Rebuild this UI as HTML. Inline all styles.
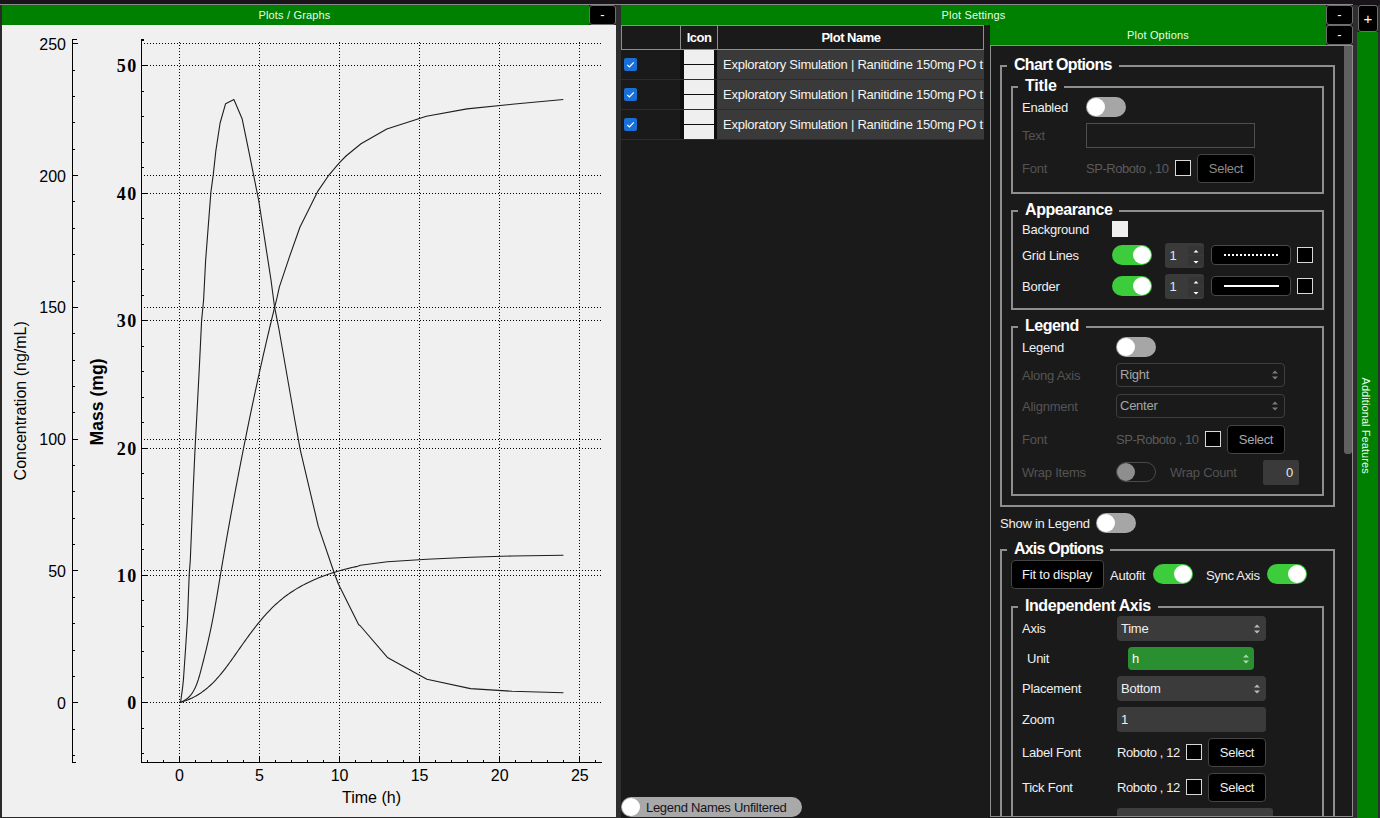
<!DOCTYPE html>
<html><head><meta charset="utf-8">
<style>
*{box-sizing:border-box;margin:0;padding:0}
html,body{width:1380px;height:818px;overflow:hidden;background:#1a1a1a;font-family:"Liberation Sans",sans-serif}
.a{position:absolute}
.hdr{position:absolute;background:#008000;color:#e6ffe6;font-size:11px;letter-spacing:0.17px;text-align:center;line-height:20px;white-space:nowrap}
.btn{position:absolute;background:#000;border:1px solid #6e6e6e;border-radius:3px;color:#fff;font-size:13px;text-align:center}
.t{position:absolute;white-space:nowrap;color:#f2f2f2;font-size:13px;letter-spacing:-0.4px}
.dim{color:#5c5c5c}
.gb{position:absolute;border:2px solid #8e8e8e}
.gt{position:absolute;white-space:nowrap;color:#fff;font-size:16px;font-weight:bold;background:#1a1a1a;padding:0 7px;letter-spacing:-0.6px;line-height:18px}
.tog{position:absolute;width:40px;height:20px;border-radius:10px;background:#a6a6a6}
.tog::after{content:"";position:absolute;top:1px;left:1px;width:18px;height:18px;border-radius:50%;background:#fff}
.tog.on{background:#3ccc3c}
.tog.on::after{left:21px}
.sw{position:absolute;width:16px;height:16px;background:#000;border:1.5px solid #d8d8d8}
.sel{position:absolute;background:#000;border:1px solid #454545;border-radius:4px;color:#eee;font-size:13px;text-align:center;letter-spacing:-0.3px}
.cb{position:absolute;background:#3b3b3b;border-radius:3px;color:#f0f0f0;font-size:13px;padding-left:6px;letter-spacing:-0.3px}
.arr{position:absolute;right:6px;top:50%;width:7px;height:10px;margin-top:-5px}
</style></head><body>
<!-- top strip -->
<div class="a" style="left:0;top:0;width:1380px;height:5px;background:#19141a"></div>
<div class="a" style="left:0;top:4px;width:1353px;height:1px;background:#8a8a8a"></div>

<!-- LEFT PANEL: Plots / Graphs -->
<div class="hdr" style="left:0;top:5px;width:589px;height:20px">Plots / Graphs</div>
<div class="a" style="left:0;top:5px;width:2px;height:813px;background:#2a2a2a"></div>
<div class="btn" style="left:589px;top:5px;width:27px;height:20px;line-height:17px">-</div>
<div class="a" style="left:2px;top:25px;width:614px;height:792px;background:#f0f0f0"></div>
<!-- CHART START -->
<svg class="a" style="left:0;top:0" width="617" height="818" viewBox="0 0 617 818">
<line x1="144" y1="702.5" x2="602" y2="702.5" stroke="#000" stroke-width="1" stroke-dasharray="1 2" shape-rendering="crispEdges"/>
<line x1="144" y1="570.5" x2="602" y2="570.5" stroke="#000" stroke-width="1" stroke-dasharray="1 2" shape-rendering="crispEdges"/>
<line x1="144" y1="439.5" x2="602" y2="439.5" stroke="#000" stroke-width="1" stroke-dasharray="1 2" shape-rendering="crispEdges"/>
<line x1="144" y1="307.5" x2="602" y2="307.5" stroke="#000" stroke-width="1" stroke-dasharray="1 2" shape-rendering="crispEdges"/>
<line x1="144" y1="175.5" x2="602" y2="175.5" stroke="#000" stroke-width="1" stroke-dasharray="1 2" shape-rendering="crispEdges"/>
<line x1="144" y1="43.5" x2="602" y2="43.5" stroke="#000" stroke-width="1" stroke-dasharray="1 2" shape-rendering="crispEdges"/>
<line x1="144" y1="702.5" x2="602" y2="702.5" stroke="#000" stroke-width="1" stroke-dasharray="1 2" shape-rendering="crispEdges"/>
<line x1="144" y1="575.5" x2="602" y2="575.5" stroke="#000" stroke-width="1" stroke-dasharray="1 2" shape-rendering="crispEdges"/>
<line x1="144" y1="448.5" x2="602" y2="448.5" stroke="#000" stroke-width="1" stroke-dasharray="1 2" shape-rendering="crispEdges"/>
<line x1="144" y1="320.5" x2="602" y2="320.5" stroke="#000" stroke-width="1" stroke-dasharray="1 2" shape-rendering="crispEdges"/>
<line x1="144" y1="193.5" x2="602" y2="193.5" stroke="#000" stroke-width="1" stroke-dasharray="1 2" shape-rendering="crispEdges"/>
<line x1="144" y1="65.5" x2="602" y2="65.5" stroke="#000" stroke-width="1" stroke-dasharray="1 2" shape-rendering="crispEdges"/>
<line x1="179.5" y1="42" x2="179.5" y2="762" stroke="#000" stroke-width="1" stroke-dasharray="1 2" shape-rendering="crispEdges"/>
<line x1="259.5" y1="42" x2="259.5" y2="762" stroke="#000" stroke-width="1" stroke-dasharray="1 2" shape-rendering="crispEdges"/>
<line x1="339.5" y1="42" x2="339.5" y2="762" stroke="#000" stroke-width="1" stroke-dasharray="1 2" shape-rendering="crispEdges"/>
<line x1="419.5" y1="42" x2="419.5" y2="762" stroke="#000" stroke-width="1" stroke-dasharray="1 2" shape-rendering="crispEdges"/>
<line x1="499.5" y1="42" x2="499.5" y2="762" stroke="#000" stroke-width="1" stroke-dasharray="1 2" shape-rendering="crispEdges"/>
<line x1="579.5" y1="42" x2="579.5" y2="762" stroke="#000" stroke-width="1" stroke-dasharray="1 2" shape-rendering="crispEdges"/>
<line x1="72.5" y1="39" x2="72.5" y2="763" stroke="#000" stroke-width="1" shape-rendering="crispEdges"/>
<line x1="72" y1="39.5" x2="77" y2="39.5" stroke="#000" stroke-width="1" shape-rendering="crispEdges"/>
<line x1="72" y1="762.5" x2="76" y2="762.5" stroke="#000" stroke-width="1" shape-rendering="crispEdges"/>
<line x1="72" y1="755.5" x2="74.5" y2="755.5" stroke="#000" stroke-width="1" shape-rendering="crispEdges"/>
<line x1="72" y1="729.5" x2="74.5" y2="729.5" stroke="#000" stroke-width="1" shape-rendering="crispEdges"/>
<line x1="72" y1="702.5" x2="78" y2="702.5" stroke="#000" stroke-width="1" shape-rendering="crispEdges"/>
<line x1="72" y1="676.5" x2="74.5" y2="676.5" stroke="#000" stroke-width="1" shape-rendering="crispEdges"/>
<line x1="72" y1="650.5" x2="74.5" y2="650.5" stroke="#000" stroke-width="1" shape-rendering="crispEdges"/>
<line x1="72" y1="623.5" x2="74.5" y2="623.5" stroke="#000" stroke-width="1" shape-rendering="crispEdges"/>
<line x1="72" y1="597.5" x2="74.5" y2="597.5" stroke="#000" stroke-width="1" shape-rendering="crispEdges"/>
<line x1="72" y1="570.5" x2="78" y2="570.5" stroke="#000" stroke-width="1" shape-rendering="crispEdges"/>
<line x1="72" y1="544.5" x2="74.5" y2="544.5" stroke="#000" stroke-width="1" shape-rendering="crispEdges"/>
<line x1="72" y1="518.5" x2="74.5" y2="518.5" stroke="#000" stroke-width="1" shape-rendering="crispEdges"/>
<line x1="72" y1="491.5" x2="74.5" y2="491.5" stroke="#000" stroke-width="1" shape-rendering="crispEdges"/>
<line x1="72" y1="465.5" x2="74.5" y2="465.5" stroke="#000" stroke-width="1" shape-rendering="crispEdges"/>
<line x1="72" y1="439.5" x2="78" y2="439.5" stroke="#000" stroke-width="1" shape-rendering="crispEdges"/>
<line x1="72" y1="412.5" x2="74.5" y2="412.5" stroke="#000" stroke-width="1" shape-rendering="crispEdges"/>
<line x1="72" y1="386.5" x2="74.5" y2="386.5" stroke="#000" stroke-width="1" shape-rendering="crispEdges"/>
<line x1="72" y1="360.5" x2="74.5" y2="360.5" stroke="#000" stroke-width="1" shape-rendering="crispEdges"/>
<line x1="72" y1="333.5" x2="74.5" y2="333.5" stroke="#000" stroke-width="1" shape-rendering="crispEdges"/>
<line x1="72" y1="307.5" x2="78" y2="307.5" stroke="#000" stroke-width="1" shape-rendering="crispEdges"/>
<line x1="72" y1="281.5" x2="74.5" y2="281.5" stroke="#000" stroke-width="1" shape-rendering="crispEdges"/>
<line x1="72" y1="254.5" x2="74.5" y2="254.5" stroke="#000" stroke-width="1" shape-rendering="crispEdges"/>
<line x1="72" y1="228.5" x2="74.5" y2="228.5" stroke="#000" stroke-width="1" shape-rendering="crispEdges"/>
<line x1="72" y1="201.5" x2="74.5" y2="201.5" stroke="#000" stroke-width="1" shape-rendering="crispEdges"/>
<line x1="72" y1="175.5" x2="78" y2="175.5" stroke="#000" stroke-width="1" shape-rendering="crispEdges"/>
<line x1="72" y1="149.5" x2="74.5" y2="149.5" stroke="#000" stroke-width="1" shape-rendering="crispEdges"/>
<line x1="72" y1="122.5" x2="74.5" y2="122.5" stroke="#000" stroke-width="1" shape-rendering="crispEdges"/>
<line x1="72" y1="96.5" x2="74.5" y2="96.5" stroke="#000" stroke-width="1" shape-rendering="crispEdges"/>
<line x1="72" y1="70.5" x2="74.5" y2="70.5" stroke="#000" stroke-width="1" shape-rendering="crispEdges"/>
<line x1="72" y1="43.5" x2="78" y2="43.5" stroke="#000" stroke-width="1" shape-rendering="crispEdges"/>
<line x1="141.5" y1="39" x2="141.5" y2="763" stroke="#000" stroke-width="1" shape-rendering="crispEdges"/>
<line x1="141" y1="39.5" x2="144" y2="39.5" stroke="#000" stroke-width="1" shape-rendering="crispEdges"/>
<line x1="141" y1="753.5" x2="143.5" y2="753.5" stroke="#000" stroke-width="1" shape-rendering="crispEdges"/>
<line x1="141" y1="728.5" x2="143.5" y2="728.5" stroke="#000" stroke-width="1" shape-rendering="crispEdges"/>
<line x1="141" y1="702.5" x2="148" y2="702.5" stroke="#000" stroke-width="1" shape-rendering="crispEdges"/>
<line x1="141" y1="677.5" x2="143.5" y2="677.5" stroke="#000" stroke-width="1" shape-rendering="crispEdges"/>
<line x1="141" y1="651.5" x2="143.5" y2="651.5" stroke="#000" stroke-width="1" shape-rendering="crispEdges"/>
<line x1="141" y1="626.5" x2="143.5" y2="626.5" stroke="#000" stroke-width="1" shape-rendering="crispEdges"/>
<line x1="141" y1="600.5" x2="143.5" y2="600.5" stroke="#000" stroke-width="1" shape-rendering="crispEdges"/>
<line x1="141" y1="575.5" x2="148" y2="575.5" stroke="#000" stroke-width="1" shape-rendering="crispEdges"/>
<line x1="141" y1="549.5" x2="143.5" y2="549.5" stroke="#000" stroke-width="1" shape-rendering="crispEdges"/>
<line x1="141" y1="524.5" x2="143.5" y2="524.5" stroke="#000" stroke-width="1" shape-rendering="crispEdges"/>
<line x1="141" y1="498.5" x2="143.5" y2="498.5" stroke="#000" stroke-width="1" shape-rendering="crispEdges"/>
<line x1="141" y1="473.5" x2="143.5" y2="473.5" stroke="#000" stroke-width="1" shape-rendering="crispEdges"/>
<line x1="141" y1="448.5" x2="148" y2="448.5" stroke="#000" stroke-width="1" shape-rendering="crispEdges"/>
<line x1="141" y1="422.5" x2="143.5" y2="422.5" stroke="#000" stroke-width="1" shape-rendering="crispEdges"/>
<line x1="141" y1="397.5" x2="143.5" y2="397.5" stroke="#000" stroke-width="1" shape-rendering="crispEdges"/>
<line x1="141" y1="371.5" x2="143.5" y2="371.5" stroke="#000" stroke-width="1" shape-rendering="crispEdges"/>
<line x1="141" y1="346.5" x2="143.5" y2="346.5" stroke="#000" stroke-width="1" shape-rendering="crispEdges"/>
<line x1="141" y1="320.5" x2="148" y2="320.5" stroke="#000" stroke-width="1" shape-rendering="crispEdges"/>
<line x1="141" y1="295.5" x2="143.5" y2="295.5" stroke="#000" stroke-width="1" shape-rendering="crispEdges"/>
<line x1="141" y1="269.5" x2="143.5" y2="269.5" stroke="#000" stroke-width="1" shape-rendering="crispEdges"/>
<line x1="141" y1="244.5" x2="143.5" y2="244.5" stroke="#000" stroke-width="1" shape-rendering="crispEdges"/>
<line x1="141" y1="218.5" x2="143.5" y2="218.5" stroke="#000" stroke-width="1" shape-rendering="crispEdges"/>
<line x1="141" y1="193.5" x2="148" y2="193.5" stroke="#000" stroke-width="1" shape-rendering="crispEdges"/>
<line x1="141" y1="167.5" x2="143.5" y2="167.5" stroke="#000" stroke-width="1" shape-rendering="crispEdges"/>
<line x1="141" y1="142.5" x2="143.5" y2="142.5" stroke="#000" stroke-width="1" shape-rendering="crispEdges"/>
<line x1="141" y1="116.5" x2="143.5" y2="116.5" stroke="#000" stroke-width="1" shape-rendering="crispEdges"/>
<line x1="141" y1="91.5" x2="143.5" y2="91.5" stroke="#000" stroke-width="1" shape-rendering="crispEdges"/>
<line x1="141" y1="65.5" x2="148" y2="65.5" stroke="#000" stroke-width="1" shape-rendering="crispEdges"/>
<line x1="141" y1="40.5" x2="143.5" y2="40.5" stroke="#000" stroke-width="1" shape-rendering="crispEdges"/>
<line x1="141" y1="762.5" x2="602" y2="762.5" stroke="#000" stroke-width="1" shape-rendering="crispEdges"/>
<line x1="147.5" y1="759.5" x2="147.5" y2="762" stroke="#000" stroke-width="1" shape-rendering="crispEdges"/>
<line x1="163.5" y1="759.5" x2="163.5" y2="762" stroke="#000" stroke-width="1" shape-rendering="crispEdges"/>
<line x1="179.5" y1="756" x2="179.5" y2="762" stroke="#000" stroke-width="1" shape-rendering="crispEdges"/>
<line x1="195.5" y1="759.5" x2="195.5" y2="762" stroke="#000" stroke-width="1" shape-rendering="crispEdges"/>
<line x1="211.5" y1="759.5" x2="211.5" y2="762" stroke="#000" stroke-width="1" shape-rendering="crispEdges"/>
<line x1="227.5" y1="759.5" x2="227.5" y2="762" stroke="#000" stroke-width="1" shape-rendering="crispEdges"/>
<line x1="243.5" y1="759.5" x2="243.5" y2="762" stroke="#000" stroke-width="1" shape-rendering="crispEdges"/>
<line x1="259.5" y1="756" x2="259.5" y2="762" stroke="#000" stroke-width="1" shape-rendering="crispEdges"/>
<line x1="275.5" y1="759.5" x2="275.5" y2="762" stroke="#000" stroke-width="1" shape-rendering="crispEdges"/>
<line x1="291.5" y1="759.5" x2="291.5" y2="762" stroke="#000" stroke-width="1" shape-rendering="crispEdges"/>
<line x1="307.5" y1="759.5" x2="307.5" y2="762" stroke="#000" stroke-width="1" shape-rendering="crispEdges"/>
<line x1="323.5" y1="759.5" x2="323.5" y2="762" stroke="#000" stroke-width="1" shape-rendering="crispEdges"/>
<line x1="339.5" y1="756" x2="339.5" y2="762" stroke="#000" stroke-width="1" shape-rendering="crispEdges"/>
<line x1="355.5" y1="759.5" x2="355.5" y2="762" stroke="#000" stroke-width="1" shape-rendering="crispEdges"/>
<line x1="371.5" y1="759.5" x2="371.5" y2="762" stroke="#000" stroke-width="1" shape-rendering="crispEdges"/>
<line x1="387.5" y1="759.5" x2="387.5" y2="762" stroke="#000" stroke-width="1" shape-rendering="crispEdges"/>
<line x1="403.5" y1="759.5" x2="403.5" y2="762" stroke="#000" stroke-width="1" shape-rendering="crispEdges"/>
<line x1="419.5" y1="756" x2="419.5" y2="762" stroke="#000" stroke-width="1" shape-rendering="crispEdges"/>
<line x1="435.5" y1="759.5" x2="435.5" y2="762" stroke="#000" stroke-width="1" shape-rendering="crispEdges"/>
<line x1="451.5" y1="759.5" x2="451.5" y2="762" stroke="#000" stroke-width="1" shape-rendering="crispEdges"/>
<line x1="467.5" y1="759.5" x2="467.5" y2="762" stroke="#000" stroke-width="1" shape-rendering="crispEdges"/>
<line x1="483.5" y1="759.5" x2="483.5" y2="762" stroke="#000" stroke-width="1" shape-rendering="crispEdges"/>
<line x1="499.5" y1="756" x2="499.5" y2="762" stroke="#000" stroke-width="1" shape-rendering="crispEdges"/>
<line x1="515.5" y1="759.5" x2="515.5" y2="762" stroke="#000" stroke-width="1" shape-rendering="crispEdges"/>
<line x1="531.5" y1="759.5" x2="531.5" y2="762" stroke="#000" stroke-width="1" shape-rendering="crispEdges"/>
<line x1="547.5" y1="759.5" x2="547.5" y2="762" stroke="#000" stroke-width="1" shape-rendering="crispEdges"/>
<line x1="563.5" y1="759.5" x2="563.5" y2="762" stroke="#000" stroke-width="1" shape-rendering="crispEdges"/>
<line x1="579.5" y1="756" x2="579.5" y2="762" stroke="#000" stroke-width="1" shape-rendering="crispEdges"/>
<line x1="595.5" y1="759.5" x2="595.5" y2="762" stroke="#000" stroke-width="1" shape-rendering="crispEdges"/>
<text x="66" y="708.8" text-anchor="end" font-family="Liberation Sans" font-size="16" fill="#000">0</text>
<text x="66" y="577.0" text-anchor="end" font-family="Liberation Sans" font-size="16" fill="#000">50</text>
<text x="66" y="445.2" text-anchor="end" font-family="Liberation Sans" font-size="16" fill="#000">100</text>
<text x="66" y="313.4" text-anchor="end" font-family="Liberation Sans" font-size="16" fill="#000">150</text>
<text x="66" y="181.6" text-anchor="end" font-family="Liberation Sans" font-size="16" fill="#000">200</text>
<text x="66" y="49.8" text-anchor="end" font-family="Liberation Sans" font-size="16" fill="#000">250</text>
<text x="137.8" y="709.3" text-anchor="end" font-family="Liberation Serif" font-weight="bold" font-size="18" letter-spacing="1.5" fill="#000">0</text>
<text x="137.8" y="581.9" text-anchor="end" font-family="Liberation Serif" font-weight="bold" font-size="18" letter-spacing="1.5" fill="#000">10</text>
<text x="137.8" y="454.5" text-anchor="end" font-family="Liberation Serif" font-weight="bold" font-size="18" letter-spacing="1.5" fill="#000">20</text>
<text x="137.8" y="327.2" text-anchor="end" font-family="Liberation Serif" font-weight="bold" font-size="18" letter-spacing="1.5" fill="#000">30</text>
<text x="137.8" y="199.8" text-anchor="end" font-family="Liberation Serif" font-weight="bold" font-size="18" letter-spacing="1.5" fill="#000">40</text>
<text x="137.8" y="72.4" text-anchor="end" font-family="Liberation Serif" font-weight="bold" font-size="18" letter-spacing="1.5" fill="#000">50</text>
<text x="179.4" y="781" text-anchor="middle" font-family="Liberation Sans" font-size="16" fill="#000">0</text>
<text x="259.5" y="781" text-anchor="middle" font-family="Liberation Sans" font-size="16" fill="#000">5</text>
<text x="339.6" y="781" text-anchor="middle" font-family="Liberation Sans" font-size="16" fill="#000">10</text>
<text x="419.6" y="781" text-anchor="middle" font-family="Liberation Sans" font-size="16" fill="#000">15</text>
<text x="499.7" y="781" text-anchor="middle" font-family="Liberation Sans" font-size="16" fill="#000">20</text>
<text x="579.8" y="781" text-anchor="middle" font-family="Liberation Sans" font-size="16" fill="#000">25</text>
<text x="371.5" y="802.8" text-anchor="middle" font-family="Liberation Sans" font-size="16" fill="#000">Time (h)</text>
<text transform="translate(25.9 400.8) rotate(-90)" text-anchor="middle" font-family="Liberation Sans" font-size="16" fill="#000">Concentration (ng/mL)</text>
<text transform="translate(103.2 401.9) rotate(-90)" text-anchor="middle" font-family="Liberation Sans" font-weight="bold" font-size="17.6" fill="#000">Mass (mg)</text>
<path d="M179.50,702.50 L180.80,700.80 L182.60,687.60 L183.40,680.00 L185.60,648.20 L187.50,618.80 L189.20,574.70 L190.30,560.00 L193.40,485.10 L195.10,447.40 L196.60,420.00 L199.40,366.20 L201.60,320.60 L203.60,300.00 L205.60,260.70 L210.90,192.10 L213.30,174.40 L215.80,151.20 L220.10,123.00 L225.60,103.70 L233.90,99.50 L242.10,118.70 L248.80,151.20 L253.70,175.60 L258.80,201.00 L271.00,280.00 L274.50,306.70 L279.10,330.00 L294.80,420.00 L300.20,449.60 L318.30,526.40 L334.40,573.50 L338.50,584.30 L358.70,624.70 L360.00,625.50 L387.40,657.40 L426.90,679.20 L470.50,688.60 L512.10,691.30 L563.40,692.70" fill="none" stroke="#1e1e1e" stroke-width="1.1" stroke-linejoin="round"/>
<path d="M179.50,702.50 L182.00,701.67 L184.28,700.58 L186.35,699.26 L188.24,697.73 L189.95,696.00 L191.50,694.10 L192.90,692.03 L194.16,689.82 L195.31,687.48 L196.36,685.04 L197.31,682.50 L198.19,679.90 L199.01,677.23 L199.78,674.53 L200.51,671.82 L201.23,669.10 L201.94,666.39 L202.64,663.68 L203.33,660.99 L204.01,658.30 L204.68,655.62 L205.34,652.95 L205.99,650.28 L206.63,647.61 L207.25,644.95 L207.87,642.30 L208.47,639.64 L209.07,636.99 L209.65,634.35 L210.21,631.70 L210.77,629.06 L211.31,626.41 L211.85,623.77 L212.37,621.12 L212.88,618.48 L213.38,615.84 L213.87,613.20 L214.36,610.55 L214.84,607.91 L215.31,605.27 L215.77,602.62 L216.23,599.98 L216.69,597.34 L217.14,594.69 L217.58,592.05 L218.03,589.40 L218.47,586.75 L218.91,584.11 L219.35,581.46 L219.79,578.81 L220.23,576.16 L220.67,573.51 L221.11,570.85 L221.56,568.20 L222.00,565.54 L222.45,562.89 L222.91,560.23 L223.36,557.57 L223.82,554.91 L224.27,552.25 L224.73,549.58 L225.20,546.92 L225.66,544.26 L226.12,541.60 L226.59,538.93 L227.06,536.27 L227.53,533.60 L228.01,530.94 L228.48,528.27 L228.96,525.61 L229.44,522.95 L229.92,520.28 L230.40,517.62 L230.88,514.95 L231.37,512.29 L231.86,509.63 L232.35,506.97 L232.84,504.31 L233.33,501.65 L233.82,498.99 L234.32,496.33 L234.81,493.67 L235.31,491.02 L235.81,488.36 L236.31,485.71 L236.81,483.06 L237.31,480.41 L237.82,477.76 L238.32,475.12 L238.83,472.47 L239.34,469.83 L239.85,467.19 L240.36,464.55 L240.87,461.91 L241.39,459.27 L241.90,456.63 L242.42,454.00 L242.94,451.37 L243.46,448.73 L243.98,446.10 L244.50,443.47 L245.03,440.84 L245.56,438.21 L246.09,435.58 L246.62,432.95 L247.15,430.32 L247.68,427.69 L248.22,425.06 L248.76,422.44 L249.30,419.81 L249.84,417.18 L250.39,414.55 L250.93,411.93 L251.48,409.30 L252.03,406.67 L252.59,404.04 L253.14,401.42 L253.70,398.79 L254.26,396.16 L254.82,393.53 L255.39,390.90 L255.96,388.27 L256.53,385.64 L257.10,383.01 L257.68,380.37 L258.25,377.74 L258.83,375.10 L259.42,372.47 L260.00,369.83 L260.59,367.19 L261.18,364.55 L261.78,361.91 L262.37,359.27 L262.97,356.62 L263.57,353.98 L264.18,351.33 L264.79,348.68 L265.40,346.03 L266.01,343.38 L266.63,340.72 L267.25,338.07 L267.87,335.41 L268.50,332.75 L269.13,330.08 L269.76,327.42 L270.40,324.75 L271.04,322.08 L271.68,319.41 L272.33,316.73 L272.98,314.05 L273.63,311.37 L274.29,308.69 L274.95,306.00 L275.61,303.32 L276.28,300.62 L276.96,297.93 L279.40,286.90 L289.70,256.10 L300.00,227.00 L308.50,209.90 L317.90,191.10 L329.10,174.80 L339.30,162.80 L346.00,156.00 L361.00,143.80 L386.80,128.90 L426.40,116.20 L467.00,108.90 L512.10,104.30 L563.30,99.50" fill="none" stroke="#1e1e1e" stroke-width="1.1" stroke-linejoin="round"/>
<path d="M179.50,702.50 L181.00,702.11 L182.48,701.68 L183.93,701.23 L185.36,700.75 L186.76,700.24 L188.14,699.70 L189.50,699.13 L190.84,698.54 L192.15,697.93 L193.45,697.29 L194.72,696.62 L195.97,695.93 L197.21,695.21 L198.42,694.48 L199.62,693.72 L200.80,692.94 L201.96,692.13 L203.10,691.31 L204.22,690.47 L205.33,689.60 L206.43,688.72 L207.51,687.82 L208.57,686.90 L209.62,685.97 L210.66,685.01 L211.68,684.04 L212.69,683.06 L213.69,682.06 L214.67,681.04 L215.65,680.01 L216.61,678.97 L217.56,677.91 L218.50,676.84 L219.44,675.76 L220.36,674.67 L221.28,673.56 L222.18,672.45 L223.08,671.32 L223.98,670.19 L224.86,669.05 L225.74,667.90 L226.62,666.74 L227.49,665.58 L228.35,664.41 L229.21,663.23 L230.07,662.05 L230.93,660.86 L231.78,659.67 L232.63,658.47 L233.47,657.27 L234.32,656.07 L235.16,654.87 L236.01,653.66 L236.85,652.45 L237.70,651.25 L238.55,650.04 L239.39,648.83 L240.24,647.62 L241.09,646.42 L241.94,645.21 L242.79,644.00 L243.65,642.80 L244.51,641.60 L245.37,640.40 L246.23,639.20 L247.09,638.00 L247.96,636.81 L248.83,635.62 L249.70,634.43 L250.58,633.25 L251.46,632.07 L252.35,630.90 L253.24,629.73 L254.13,628.56 L255.03,627.40 L255.94,626.24 L256.85,625.09 L257.76,623.95 L258.68,622.81 L259.61,621.68 L260.54,620.56 L261.48,619.44 L262.42,618.33 L263.38,617.23 L264.33,616.14 L265.30,615.05 L266.27,613.98 L267.25,612.91 L268.24,611.85 L269.24,610.80 L270.24,609.76 L271.25,608.73 L272.27,607.72 L273.30,606.71 L274.34,605.71 L275.39,604.72 L276.45,603.75 L277.51,602.79 L278.59,601.84 L279.68,600.90 L280.78,599.97 L281.88,599.06 L283.00,598.16 L284.13,597.28 L285.27,596.40 L286.42,595.54 L287.58,594.70 L288.75,593.87 L289.94,593.05 L291.13,592.24 L292.33,591.45 L293.54,590.67 L294.76,589.90 L295.99,589.15 L297.23,588.40 L298.47,587.67 L299.73,586.95 L300.99,586.25 L302.27,585.55 L303.55,584.87 L304.83,584.20 L306.13,583.54 L307.43,582.89 L308.74,582.26 L310.06,581.63 L311.38,581.02 L312.71,580.42 L314.05,579.82 L315.39,579.24 L316.74,578.67 L318.10,578.11 L319.46,577.56 L320.83,577.02 L322.20,576.50 L323.58,575.98 L324.96,575.47 L326.35,574.97 L327.74,574.48 L329.13,574.00 L330.53,573.53 L331.94,573.07 L333.34,572.62 L334.76,572.18 L336.17,571.75 L337.59,571.32 L339.01,570.91 L340.43,570.50 L341.86,570.11 L343.29,569.72 L344.72,569.34 L346.16,568.97 L347.59,568.60 L349.03,568.25 L350.47,567.90 L351.91,567.56 L353.35,567.23 L354.79,566.90 L356.24,566.59 L357.68,566.28 L360.40,565.30 L387.40,561.80 L426.90,559.30 L470.50,557.20 L512.10,556.00 L563.40,555.20" fill="none" stroke="#1e1e1e" stroke-width="1.1" stroke-linejoin="round"/>
</svg>
<!-- CHART END -->
<div class="a" style="left:0;top:817px;width:621px;height:1px;background:#2a2a2a"></div>
<div class="a" style="left:616px;top:5px;width:5px;height:813px;background:#2e2e2e"></div>

<!-- MIDDLE PANEL: Plot Settings -->
<div class="hdr" style="left:621px;top:5px;width:705px;height:20px">Plot Settings</div>
<div class="btn" style="left:1326px;top:5px;width:27px;height:20px;line-height:17px">-</div>
<div class="a" style="left:1353px;top:5px;width:5px;height:813px;background:#2e2e2e"></div>


<!-- TABLE -->
<div class="a" style="left:621px;top:25px;width:363px;height:25px;border:1px solid #8e8e8e;background:#1a1a1a"></div>
<div class="a" style="left:680px;top:25px;width:1px;height:25px;background:#8e8e8e"></div>
<div class="a" style="left:717px;top:25px;width:1px;height:25px;background:#8e8e8e"></div>
<div class="t" style="left:681px;top:31px;width:36px;text-align:center;font-weight:bold;font-size:13px;line-height:13px;letter-spacing:-0.5px;color:#fff">Icon</div>
<div class="t" style="left:718px;top:31px;width:266px;text-align:center;font-weight:bold;font-size:13px;line-height:13px;letter-spacing:-0.5px;color:#fff">Plot Name</div>

<div class="a" style="left:621px;top:50px;width:59px;height:29px;background:#1a1a1a"></div>
<div class="a" style="left:621px;top:79px;width:363px;height:1px;background:#2c2c2c"></div>
<div class="a" style="left:680px;top:50px;width:37px;height:29px;background:#0e0e0e"></div>
<div class="a" style="left:684px;top:50px;width:30px;height:14px;background:#efefef"></div>
<div class="a" style="left:684px;top:65px;width:30px;height:14px;background:#efefef"></div>
<div class="a" style="left:717px;top:50px;width:267px;height:29px;background:#3a3a3a;overflow:hidden">
  <div class="t" style="left:6px;top:8px;font-size:13px;line-height:13px;letter-spacing:-0.25px;color:#f4f4f4">Exploratory Simulation | Ranitidine 150mg PO t</div>
</div>
<div class="a" style="left:624px;top:58px;width:13px;height:13px;border-radius:2px;background:#1a6fd6">
  <svg width="13" height="13" style="position:absolute;left:0;top:0"><path d="M3.2 6.8 L5.4 9 L9.8 4.4" stroke="#fff" stroke-width="1.2" fill="none"/></svg>
</div>
<div class="a" style="left:621px;top:80px;width:59px;height:29px;background:#1a1a1a"></div>
<div class="a" style="left:621px;top:109px;width:363px;height:1px;background:#2c2c2c"></div>
<div class="a" style="left:680px;top:80px;width:37px;height:29px;background:#0e0e0e"></div>
<div class="a" style="left:684px;top:80px;width:30px;height:14px;background:#efefef"></div>
<div class="a" style="left:684px;top:95px;width:30px;height:14px;background:#efefef"></div>
<div class="a" style="left:717px;top:80px;width:267px;height:29px;background:#3a3a3a;overflow:hidden">
  <div class="t" style="left:6px;top:8px;font-size:13px;line-height:13px;letter-spacing:-0.25px;color:#f4f4f4">Exploratory Simulation | Ranitidine 150mg PO t</div>
</div>
<div class="a" style="left:624px;top:88px;width:13px;height:13px;border-radius:2px;background:#1a6fd6">
  <svg width="13" height="13" style="position:absolute;left:0;top:0"><path d="M3.2 6.8 L5.4 9 L9.8 4.4" stroke="#fff" stroke-width="1.2" fill="none"/></svg>
</div>
<div class="a" style="left:621px;top:110px;width:59px;height:29px;background:#1a1a1a"></div>
<div class="a" style="left:621px;top:139px;width:363px;height:1px;background:#2c2c2c"></div>
<div class="a" style="left:680px;top:110px;width:37px;height:29px;background:#0e0e0e"></div>
<div class="a" style="left:684px;top:110px;width:30px;height:14px;background:#efefef"></div>
<div class="a" style="left:684px;top:125px;width:30px;height:14px;background:#efefef"></div>
<div class="a" style="left:717px;top:110px;width:267px;height:29px;background:#3a3a3a;overflow:hidden">
  <div class="t" style="left:6px;top:8px;font-size:13px;line-height:13px;letter-spacing:-0.25px;color:#f4f4f4">Exploratory Simulation | Ranitidine 150mg PO t</div>
</div>
<div class="a" style="left:624px;top:118px;width:13px;height:13px;border-radius:2px;background:#1a6fd6">
  <svg width="13" height="13" style="position:absolute;left:0;top:0"><path d="M3.2 6.8 L5.4 9 L9.8 4.4" stroke="#fff" stroke-width="1.2" fill="none"/></svg>
</div>
<!-- legend names unfiltered -->
<div class="a" style="left:621px;top:797px;width:181px;height:20px;border-radius:10px;background:#a9a9a9"></div>
<div class="a" style="left:622px;top:798px;width:18px;height:18px;border-radius:50%;background:#fff"></div>
<div class="t" style="left:646px;top:801px;font-size:13px;line-height:13px;letter-spacing:-0.3px;color:#15151f">Legend Names Unfiltered</div>

<!-- RIGHT: Plot Options -->
<div class="hdr" style="left:990px;top:25px;width:336px;height:20px">Plot Options</div>
<div class="btn" style="left:1326px;top:25px;width:27px;height:20px;line-height:17px">-</div>

<!-- OPTS START -->
<div class="a" style="left:990px;top:45px;width:363px;height:772px;border:1px solid #8e8e8e;border-bottom:1px solid #8e8e8e"></div>
<div class="a" style="left:1344px;top:46px;width:8px;height:408px;background:#606060;border-radius:0 0 3px 3px"></div>
<div class="gb" style="left:1000px;top:65px;width:335px;height:442px"></div>
<div class="gt" style="left:1007px;top:56px;letter-spacing:-0.69px">Chart Options</div>
<div class="gb" style="left:1011px;top:86px;width:313px;height:108px"></div>
<div class="gt" style="left:1018px;top:77px;letter-spacing:-0.2px">Title</div>
<div class="t" style="left:1022px;top:101.0px;font-size:13px;line-height:13px;color:#f0f0f0;letter-spacing:-0.25px;font-weight:normal;">Enabled</div>
<div class="tog" style="left:1086px;top:97px"></div>
<div class="t" style="left:1022px;top:129.0px;font-size:13px;line-height:13px;color:#545454;letter-spacing:-0.25px;font-weight:normal;">Text</div>
<div class="a" style="left:1086px;top:123px;width:169px;height:25px;background:transparent;border:1px solid #4e4e4e;border-radius:0px;"></div>
<div class="t" style="left:1022px;top:162.0px;font-size:13px;line-height:13px;color:#545454;letter-spacing:-0.25px;font-weight:normal;">Font</div>
<div class="t" style="left:1086px;top:162.0px;font-size:13px;line-height:13px;color:#5a5a5a;letter-spacing:-0.45px;font-weight:normal;">SP-Roboto , 10</div>
<div class="a" style="left:1175px;top:160px;width:16px;height:16px;background:#000;border:1.5px solid #d8d8d8"></div>
<div class="sel" style="left:1197px;top:154px;width:58px;height:29px;line-height:27px;color:#8c8c8c">Select</div>
<div class="gb" style="left:1011px;top:210px;width:313px;height:100px"></div>
<div class="gt" style="left:1018px;top:201px;letter-spacing:-0.42px">Appearance</div>
<div class="t" style="left:1022px;top:223.0px;font-size:13px;line-height:13px;color:#f0f0f0;letter-spacing:-0.25px;font-weight:normal;">Background</div>
<div class="a" style="left:1112px;top:221px;width:16px;height:16px;background:#efefef;border:none"></div>
<div class="t" style="left:1022px;top:249.0px;font-size:13px;line-height:13px;color:#f0f0f0;letter-spacing:-0.25px;font-weight:normal;">Grid Lines</div>
<div class="tog on" style="left:1112px;top:245px"></div>
<div class="a" style="left:1165px;top:243px;width:39px;height:25px;background:#3a3a3a;border-radius:3px;"></div>
<div class="a" style="left:1188px;top:246px;width:16px;height:9px;background:#353535;border-radius:0px;"></div>
<div class="a" style="left:1188px;top:256px;width:16px;height:10px;background:#353535;border-radius:0px;"></div>
<svg class="a" style="left:1192px;top:247px" width="8" height="18"><path d="M1.5 5.5 L4 3 L6.5 5.5Z M1.5 14 L4 16.5 L6.5 14Z" fill="#fff"/></svg>
<div class="t" style="left:1169.5px;top:249.0px;font-size:13px;line-height:13px;color:#dfe6ee;letter-spacing:-0.25px;font-weight:normal;">1</div>
<div class="a" style="left:1211px;top:245px;width:80px;height:20px;background:#000;border:1px solid #4a4a4a;border-radius:4px;"></div>
<div class="a" style="left:1224px;top:254px;width:55px;height:2px;background:repeating-linear-gradient(90deg,#fff 0 2px,transparent 2px 4px)"></div>
<div class="a" style="left:1297px;top:247px;width:16px;height:16px;background:#000;border:1.5px solid #d8d8d8"></div>
<div class="t" style="left:1022px;top:280.0px;font-size:13px;line-height:13px;color:#f0f0f0;letter-spacing:-0.25px;font-weight:normal;">Border</div>
<div class="tog on" style="left:1112px;top:276px"></div>
<div class="a" style="left:1165px;top:274px;width:39px;height:25px;background:#3a3a3a;border-radius:3px;"></div>
<div class="a" style="left:1188px;top:277px;width:16px;height:9px;background:#353535;border-radius:0px;"></div>
<div class="a" style="left:1188px;top:287px;width:16px;height:10px;background:#353535;border-radius:0px;"></div>
<svg class="a" style="left:1192px;top:278px" width="8" height="18"><path d="M1.5 5.5 L4 3 L6.5 5.5Z M1.5 14 L4 16.5 L6.5 14Z" fill="#fff"/></svg>
<div class="t" style="left:1169.5px;top:280.0px;font-size:13px;line-height:13px;color:#dfe6ee;letter-spacing:-0.25px;font-weight:normal;">1</div>
<div class="a" style="left:1211px;top:276px;width:80px;height:20px;background:#000;border:1px solid #4a4a4a;border-radius:4px;"></div>
<div class="a" style="left:1224px;top:285px;width:55px;height:2px;background:#fff"></div>
<div class="a" style="left:1297px;top:278px;width:16px;height:16px;background:#000;border:1.5px solid #d8d8d8"></div>
<div class="gb" style="left:1011px;top:326px;width:313px;height:170px"></div>
<div class="gt" style="left:1018px;top:317px;letter-spacing:-0.52px">Legend</div>
<div class="t" style="left:1022px;top:341.0px;font-size:13px;line-height:13px;color:#f0f0f0;letter-spacing:-0.25px;font-weight:normal;">Legend</div>
<div class="tog" style="left:1116px;top:337px"></div>
<div class="t" style="left:1022px;top:369.0px;font-size:13px;line-height:13px;color:#545454;letter-spacing:-0.25px;font-weight:normal;">Along Axis</div>
<div class="a" style="left:1116px;top:363px;width:169px;height:24px;background:transparent;border:1px solid #3e3e3e;border-radius:4px;"></div>
<div class="t" style="left:1120px;top:368.2px;font-size:13px;line-height:13px;color:#a6a6a6;letter-spacing:-0.25px;font-weight:normal;">Right</div>
<svg class="a" style="left:1271px;top:369.0px" width="8" height="12"><path d="M1 4.5 L4 1.5 L7 4.5Z M1 7.5 L4 10.5 L7 7.5Z" fill="#7a7a7a"/></svg>
<div class="t" style="left:1022px;top:400.0px;font-size:13px;line-height:13px;color:#545454;letter-spacing:-0.25px;font-weight:normal;">Alignment</div>
<div class="a" style="left:1116px;top:394px;width:169px;height:24px;background:transparent;border:1px solid #3e3e3e;border-radius:4px;"></div>
<div class="t" style="left:1120px;top:399.2px;font-size:13px;line-height:13px;color:#a6a6a6;letter-spacing:-0.25px;font-weight:normal;">Center</div>
<svg class="a" style="left:1271px;top:400.0px" width="8" height="12"><path d="M1 4.5 L4 1.5 L7 4.5Z M1 7.5 L4 10.5 L7 7.5Z" fill="#7a7a7a"/></svg>
<div class="t" style="left:1022px;top:433.0px;font-size:13px;line-height:13px;color:#545454;letter-spacing:-0.25px;font-weight:normal;">Font</div>
<div class="t" style="left:1116px;top:433.0px;font-size:13px;line-height:13px;color:#5a5a5a;letter-spacing:-0.45px;font-weight:normal;">SP-Roboto , 10</div>
<div class="a" style="left:1205px;top:431px;width:16px;height:16px;background:#000;border:1.5px solid #d8d8d8"></div>
<div class="sel" style="left:1227px;top:425px;width:58px;height:29px;line-height:27px;color:#a8a8a8">Select</div>
<div class="t" style="left:1022px;top:466.0px;font-size:13px;line-height:13px;color:#545454;letter-spacing:-0.25px;font-weight:normal;">Wrap Items</div>
<div class="a" style="left:1116px;top:462px;width:40px;height:20px;border-radius:10px;border:1px solid #4a4a4a"></div>
<div class="a" style="left:1117px;top:463px;width:18px;height:18px;border-radius:50%;background:#8e8e8e"></div>
<div class="t" style="left:1170px;top:466.0px;font-size:13px;line-height:13px;color:#545454;letter-spacing:-0.25px;font-weight:normal;">Wrap Count</div>
<div class="a" style="left:1263px;top:460px;width:36px;height:25px;background:#3a3a3a;border-radius:2px;"></div>
<div class="t" style="left:1286px;top:466.0px;font-size:13px;line-height:13px;color:#e8e8e8;letter-spacing:-0.25px;font-weight:normal;">0</div>
<div class="t" style="left:1000px;top:517.0px;font-size:13px;line-height:13px;color:#f0f0f0;letter-spacing:-0.25px;font-weight:normal;">Show in Legend</div>
<div class="tog" style="left:1096px;top:513px"></div>
<div class="gb" style="left:1000px;top:549px;width:335px;height:400px"></div>
<div class="gt" style="left:1007px;top:540px;letter-spacing:-0.79px">Axis Options</div>
<div class="sel" style="left:1011px;top:560px;width:93px;height:29px;line-height:27px;color:#f4f4f4;text-align:left;padding-left:10px;letter-spacing:-0.2px">Fit to display</div>
<div class="t" style="left:1110px;top:569.0px;font-size:13px;line-height:13px;color:#f0f0f0;letter-spacing:-0.25px;font-weight:normal;">Autofit</div>
<div class="tog on" style="left:1153px;top:564px"></div>
<div class="t" style="left:1206px;top:569.0px;font-size:13px;line-height:13px;color:#f0f0f0;letter-spacing:-0.3px;font-weight:normal;">Sync Axis</div>
<div class="tog on" style="left:1267px;top:564px"></div>
<div class="gb" style="left:1011px;top:606px;width:313px;height:400px"></div>
<div class="gt" style="left:1018px;top:597px;letter-spacing:-0.44px">Independent Axis</div>
<div class="t" style="left:1022px;top:622.0px;font-size:13px;line-height:13px;color:#f0f0f0;letter-spacing:-0.25px;font-weight:normal;">Axis</div>
<div class="a" style="left:1117px;top:616px;width:149px;height:25px;background:#3b3b3b;border-radius:4px;"></div>
<div class="t" style="left:1121px;top:621.7px;font-size:13px;line-height:13px;color:#f0f0f0;letter-spacing:-0.25px;font-weight:normal;">Time</div>
<svg class="a" style="left:1253px;top:622.5px" width="8" height="12"><path d="M1 4.5 L4 1.5 L7 4.5Z M1 7.5 L4 10.5 L7 7.5Z" fill="#b8b8b8"/></svg>
<div class="t" style="left:1027px;top:652.0px;font-size:13px;line-height:13px;color:#f0f0f0;letter-spacing:-0.25px;font-weight:normal;">Unit</div>
<div class="a" style="left:1128px;top:647px;width:126px;height:23px;background:#2a8f31;border-radius:4px;"></div>
<div class="t" style="left:1132px;top:651.7px;font-size:13px;line-height:13px;color:#f4fff4;letter-spacing:-0.25px;font-weight:normal;">h</div>
<svg class="a" style="left:1242px;top:652.5px" width="8" height="12"><path d="M1 4.5 L4 1.5 L7 4.5Z M1 7.5 L4 10.5 L7 7.5Z" fill="#a9d9ab"/></svg>
<div class="t" style="left:1022px;top:682.0px;font-size:13px;line-height:13px;color:#f0f0f0;letter-spacing:-0.25px;font-weight:normal;">Placement</div>
<div class="a" style="left:1117px;top:676px;width:149px;height:25px;background:#3b3b3b;border-radius:4px;"></div>
<div class="t" style="left:1121px;top:681.7px;font-size:13px;line-height:13px;color:#f0f0f0;letter-spacing:-0.25px;font-weight:normal;">Bottom</div>
<svg class="a" style="left:1253px;top:682.5px" width="8" height="12"><path d="M1 4.5 L4 1.5 L7 4.5Z M1 7.5 L4 10.5 L7 7.5Z" fill="#b8b8b8"/></svg>
<div class="t" style="left:1022px;top:713.0px;font-size:13px;line-height:13px;color:#f0f0f0;letter-spacing:-0.25px;font-weight:normal;">Zoom</div>
<div class="a" style="left:1117px;top:707px;width:149px;height:25px;background:#3b3b3b;border-radius:3px;"></div>
<div class="t" style="left:1121px;top:713.0px;font-size:13px;line-height:13px;color:#f0f0f0;letter-spacing:-0.25px;font-weight:normal;">1</div>
<div class="t" style="left:1022px;top:746.0px;font-size:13px;line-height:13px;color:#f0f0f0;letter-spacing:-0.25px;font-weight:normal;">Label Font</div>
<div class="t" style="left:1117px;top:746.0px;font-size:13px;line-height:13px;color:#f0f0f0;letter-spacing:-0.4px;font-weight:normal;">Roboto , 12</div>
<div class="a" style="left:1186px;top:744px;width:16px;height:16px;background:#000;border:1.5px solid #d8d8d8"></div>
<div class="sel" style="left:1208px;top:738px;width:58px;height:29px;line-height:27px;color:#eee">Select</div>
<div class="t" style="left:1022px;top:781.0px;font-size:13px;line-height:13px;color:#f0f0f0;letter-spacing:-0.25px;font-weight:normal;">Tick Font</div>
<div class="t" style="left:1117px;top:781.0px;font-size:13px;line-height:13px;color:#f0f0f0;letter-spacing:-0.4px;font-weight:normal;">Roboto , 12</div>
<div class="a" style="left:1186px;top:779px;width:16px;height:16px;background:#000;border:1.5px solid #d8d8d8"></div>
<div class="sel" style="left:1208px;top:773px;width:58px;height:29px;line-height:27px;color:#eee">Select</div>
<div class="a" style="left:1117px;top:808px;width:156px;height:20px;background:#3e3e3e;border-radius:3px;"></div>
<div class="a" style="left:990px;top:816px;width:363px;height:1px;background:#8e8e8e"></div>
<div class="a" style="left:990px;top:817px;width:363px;height:1px;background:#1a1a1a"></div>
<!-- OPTS END -->
<!-- Additional features strip -->
<div class="btn" style="left:1358px;top:5px;width:20px;height:27px;line-height:26px;font-size:15px">+</div>
<div class="a" style="left:1357px;top:32px;width:21px;height:786px;background:#008000"></div>
<div class="a" style="left:1316.8px;top:419.3px;width:96px;height:13px;font-size:11px;line-height:13px;color:#eaffea;white-space:nowrap;text-align:center;transform:rotate(90deg);letter-spacing:0.08px">Additional Features</div>
<div class="a" style="left:1378px;top:5px;width:2px;height:813px;background:#2e2e2e"></div>

</body></html>
